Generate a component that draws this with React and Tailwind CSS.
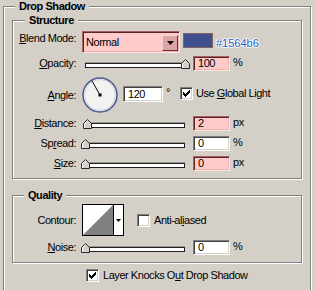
function Group({ title, titleMl, className, children }) {
  return (
    <div
      className={`border border-[#808080] shadow-[inset_1px_1px_0_#fff,1px_1px_0_#fff] ${className}`}
    >
      <div
        className={`-mt-[7px] w-fit bg-[#d4d0c8] px-[4px] font-bold leading-[13px] ${titleMl}`}
      >
        {title}
      </div>
      {children}
    </div>
  );
}

function Label({ children }) {
  return <div className="w-[63px] shrink-0 text-right">{children}</div>;
}

function Field({ value, pink, w = "w-[37px]", h = "h-[15px]" }) {
  const look = pink
    ? "border-t-[#a46262] border-l-[#a46262] border-b-[#ffe4e4] border-r-[#ffe4e4] bg-[#ffcaca] shadow-[inset_1px_1px_0_#5e2222,inset_-1px_-1px_0_#eeb2b2]"
    : "border-t-[#808080] border-l-[#808080] border-b-white border-r-white bg-white shadow-[inset_1px_1px_0_#404040,inset_-1px_-1px_0_#d4d0c8]";
  return (
    <div className={`${w} ${h} flex items-center pl-[4px] border ${look}`}>
      {value}
    </div>
  );
}

function Thumb({ className }) {
  return (
    <svg
      width="9"
      height="10"
      viewBox="0 0 9 10"
      className={`absolute top-0 ${className}`}
    >
      <polygon
        points="0.5,9.5 0.5,4.5 4.5,0.5 8.5,4.5 8.5,9.5"
        fill="#d4d0c8"
        stroke="#2a2a2a"
      />
      <polyline points="1.5,9 1.5,4.9 4.5,1.9" fill="none" stroke="#fff" />
    </svg>
  );
}

function Slider({ thumb }) {
  return (
    <div className="relative w-[110px] h-[10px] shrink-0">
      <div className="absolute left-[4px] top-[4px] w-[100px] h-[5px] bg-white border border-[#1e1e1e] shadow-[0_-1px_0_#9a9a9a]" />
      <Thumb className={thumb} />
    </div>
  );
}

function Check({ checked }) {
  return (
    <div className="w-[13px] h-[13px] shrink-0 bg-white border border-t-[#808080] border-l-[#808080] border-b-white border-r-white shadow-[inset_1px_1px_0_#404040,inset_-1px_-1px_0_#d4d0c8] flex items-center justify-center">
      {checked && (
        <svg width="7" height="7" viewBox="0 0 7 7" shapeRendering="crispEdges">
          <rect x="6" y="0" width="1" height="1" />
          <rect x="5" y="1" width="2" height="1" />
          <rect x="0" y="2" width="1" height="1" />
          <rect x="4" y="2" width="3" height="1" />
          <rect x="0" y="3" width="2" height="1" />
          <rect x="3" y="3" width="3" height="1" />
          <rect x="0" y="4" width="5" height="1" />
          <rect x="1" y="5" width="3" height="1" />
          <rect x="2" y="6" width="1" height="1" />
        </svg>
      )}
    </div>
  );
}

function SliderRow({ label, thumb, value, pink, unit, className }) {
  return (
    <div className={`flex items-center h-[15px] ${className}`}>
      <Label>{label}</Label>
      <div className="ml-[5px]">
        <Slider thumb={thumb} />
      </div>
      <div className="ml-[2px]">
        <Field value={value} pink={pink} />
      </div>
      <span className="ml-[3px] -mt-[3px]">{unit}</span>
    </div>
  );
}

export default function App() {
  return (
    <div className="w-[316px] h-[290px] overflow-hidden bg-[#d4d0c8] pt-[6px] pl-[3px] text-black text-[11px] leading-[13px] tracking-[-0.45px] font-['Liberation_Sans',Arial,sans-serif]">
      <Group title="Drop Shadow" titleMl="ml-[11px]" className="w-[308px] pb-[40px]">
        <Group title="Structure" titleMl="ml-[12px]" className="mt-[7px] ml-[8px] w-[290px] pb-[7px]">
          {/* blend mode */}
          <div className="flex items-start h-[22px] mt-[4px]">
            <div className="mt-[1px]">
              <Label>
                <u>B</u>lend Mode:
              </Label>
            </div>
            <div className="ml-[6px] w-[98px] h-[22px] flex items-end pb-[1px] pl-[3px] pr-[1px] bg-[#ffcaca] border border-t-[#a46262] border-l-[#a46262] border-b-[#ffe4e4] border-r-[#ffe4e4] shadow-[inset_1px_1px_0_#5e2222,inset_-1px_-1px_0_#eeb2b2]">
              <span className="flex-1 mb-[2px]">Normal</span>
              <div className="w-[16px] h-[16px] flex items-center justify-center bg-[#dca5a5] border border-t-[#f6d2d2] border-l-[#f6d2d2] border-b-[#6e2e2e] border-r-[#6e2e2e]">
                <svg width="7" height="4" viewBox="0 0 7 4">
                  <polygon points="0,0 7,0 3.5,4" fill="#000" />
                </svg>
              </div>
            </div>
            <div className="ml-[3px] mt-[2px] w-[30px] h-[15px] bg-[#41508f] border border-[#7e6464]" />
            <span className="ml-[3px] mt-[6px] text-[#1b5fc4] tracking-normal [text-shadow:1px_0_0_#fff,-1px_0_0_#fff,0_1px_0_#fff,0_-1px_0_#fff]">
              #1564b6
            </span>
          </div>

          <SliderRow
            className="mt-[3px]"
            label={
              <>
                <u>O</u>pacity:
              </>
            }
            thumb="left-[100px]"
            value="100"
            pink
            unit="%"
          />

          {/* angle */}
          <div className="flex items-center h-[36px] mt-[6px]">
            <Label>
              <u>A</u>ngle:
            </Label>
            <svg width="36" height="36" viewBox="0 0 36 36" className="ml-[6px] shrink-0">
              <circle cx="18" cy="18" r="17" fill="#f2f2f0" stroke="#4a5c8e" strokeWidth="1.5" />
              <circle cx="18" cy="18" r="15.5" fill="none" stroke="#cdd2e0" strokeWidth="1" />
              <line x1="18" y1="18" x2="9.8" y2="3.6" stroke="#000" strokeWidth="1" />
              <rect x="16.5" y="16.5" width="3" height="3" fill="#000" />
            </svg>
            <div className="ml-[5px] -mt-[2px]">
              <Field value="120" w="w-[40px]" h="h-[16px]" />
            </div>
            <span className="ml-[3px] -mt-[6px]">°</span>
            <div className="ml-[10px] -mt-[3px]">
              <Check checked />
            </div>
            <span className="ml-[3px] -mt-[3px]">
              Use <u>G</u>lobal Light
            </span>
          </div>

          <SliderRow
            className="mt-[3px]"
            label={
              <>
                <u>D</u>istance:
              </>
            }
            thumb="left-[2px]"
            value="2"
            pink
            unit="px"
          />
          <SliderRow
            className="mt-[5px]"
            label={
              <>
                Sp<u>r</u>ead:
              </>
            }
            thumb="left-0"
            value="0"
            unit="%"
          />
          <SliderRow
            className="mt-[5px]"
            label={
              <>
                <u>S</u>ize:
              </>
            }
            thumb="left-0"
            value="0"
            pink
            unit="px"
          />
        </Group>

        <Group title="Quality" titleMl="ml-[11px]" className="mt-[16px] ml-[8px] w-[290px] pb-[7px]">
          <div className="flex items-center h-[32px] mt-[2px]">
            <Label>Contour:</Label>
            <div className="ml-[6px] flex w-[42px] h-[32px] border border-black bg-white">
              <svg width="30" height="30" viewBox="0 0 30 30" className="block shrink-0">
                <polygon points="0,30 30,0 30,30" fill="#808080" />
              </svg>
              <div className="w-[1px] bg-black" />
              <div className="flex-1 flex items-center justify-center">
                <svg width="5" height="3" viewBox="0 0 5 3">
                  <polygon points="0,0 5,0 2.5,3" fill="#000" />
                </svg>
              </div>
            </div>
            <div className="ml-[13px]">
              <Check />
            </div>
            <span className="ml-[4px]">
              Anti-al<u>i</u>ased
            </span>
          </div>
          <SliderRow
            className="mt-[4px]"
            label={
              <>
                <u>N</u>oise:
              </>
            }
            thumb="left-0"
            value="0"
            unit="%"
          />
        </Group>

        <div className="flex items-center mt-[6px] ml-[82px]">
          <Check checked />
          <span className="ml-[4px]">
            Layer Knocks O<u>u</u>t Drop Shadow
          </span>
        </div>
      </Group>
    </div>
  );
}
